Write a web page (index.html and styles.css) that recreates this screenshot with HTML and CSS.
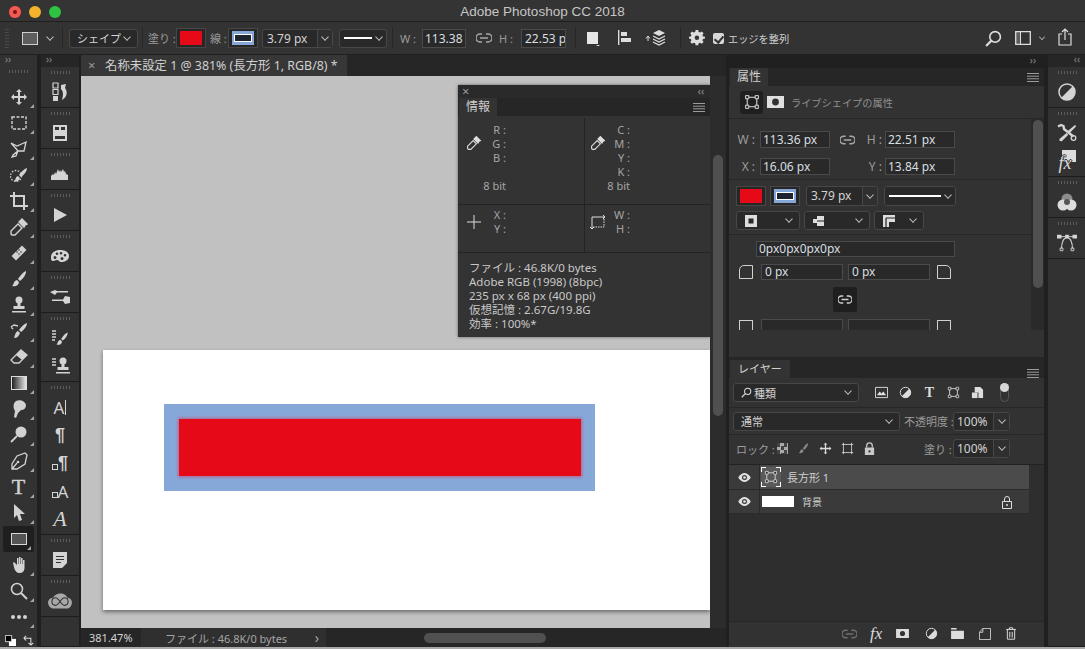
FILE: index.html
```html
<!DOCTYPE html>
<html lang="ja">
<head>
  <meta charset="UTF-8" />
  <title>Adobe Photoshop CC 2018</title>
  <link rel="stylesheet" href="styles.css">
</head>
<body>
<svg class="sprite" xmlns="http://www.w3.org/2000/svg">
  <symbol id="i-link" viewBox="0 0 16 10"><path d="M6 1H4a4 4 0 0 0 0 8h2M10 1h2a4 4 0 0 1 0 8h-2M4 5h8" fill="none" stroke="currentColor" stroke-width="1.5"/></symbol>
  <symbol id="i-dropper" viewBox="0 0 20 20"><path d="M13 2l5 5-2 1-1 2-5-5 1-1zM9 7l4 4-7 7H3l-1-1v-3z" fill="none" stroke="currentColor" stroke-width="1.4"/><path d="M13 2l5 5-2 1-1 2-5-5 1-1z" fill="currentColor"/></symbol>
  <symbol id="i-shape" viewBox="0 0 20 20"><path d="M4 4h12v12H4z" fill="none" stroke="currentColor" stroke-width="1.3"/><path d="M2 2h4v4H2zM14 2h4v4h-4zM2 14h4v4H2zM14 14h4v4h-4z" fill="#262626" stroke="currentColor" stroke-width="1.2"/></symbol>
  <symbol id="i-mask" viewBox="0 0 20 14"><path fill-rule="evenodd" d="M0 0h20v14H0zM10 3a4 4 0 1 0 0 8 4 4 0 0 0 0-8z" fill="currentColor"/></symbol>
  <symbol id="i-adjust" viewBox="0 0 20 20"><circle cx="10" cy="10" r="8" fill="none" stroke="currentColor" stroke-width="1.5"/><path d="M15.7 4.3A8 8 0 0 1 4.3 15.7z" fill="currentColor"/></symbol>
  <symbol id="i-trash" viewBox="0 0 14 16"><path d="M1 3h12M5 3V1h4v2M2.500 3v12h9V3M5.500 6v7M8.500 6v7" fill="none" stroke="currentColor" stroke-width="1.2"/></symbol>
  <symbol id="i-lock" viewBox="0 0 12 14"><path fill-rule="evenodd" d="M1 6h10v8H1zM6 9a1.200 1.200 0 1 0 0 2.400A1.200 1.200 0 0 0 6 9z" fill="currentColor"/><path d="M3 6V4a3 3 0 0 1 6 0v2" fill="none" stroke="currentColor" stroke-width="1.4"/></symbol>
  <symbol id="i-eye" viewBox="0 0 14 10"><path fill-rule="evenodd" d="M0 5c2-3.300 4.500-5 7-5s5 1.700 7 5c-2 3.300-4.500 5-7 5S2 8.300 0 5zM7 2.200a2.800 2.800 0 1 0 0 5.600 2.800 2.800 0 0 0 0-5.600z" fill="currentColor"/><circle cx="7" cy="5" r="1.500" fill="currentColor"/></symbol>
  <symbol id="i-brush" viewBox="0 0 20 20"><path d="M17 2c.5 3-3 8-6 10l-2-2c2-3 5-7 8-8zM8 11l2 2c0 3-3 5-7 4 2-1 1-5 5-6z" fill="currentColor"/></symbol>
  <symbol id="i-lines" viewBox="0 0 12 9"><path d="M0 .5h12M0 3.200h12M0 5.800h12M0 8.500h12" stroke="currentColor" stroke-width="1"/></symbol>
</svg>

<div class="app">
  <header class="titlebar">
    <div class="lights"><i class="light red"></i><i class="light yellow"></i><i class="light green"></i></div>
    <div class="app-title">Adobe Photoshop CC 2018</div>
  </header>

  <div class="options">
    <span class="opt-grip"></span>
    <span class="opt-tool"></span>
    <span class="chev opt-tool-chev"></span>
    <span class="opt-sep"></span>
    <div class="select opt-mode"><span>シェイプ</span><span class="chev"></span></div>
    <span class="opt-sep opt-sep-b"></span>
    <span class="opt-label">塗り :</span>
    <span class="swatch fill"><i></i></span>
    <span class="opt-label opt-line-label">線 :</span>
    <span class="swatch stroke"><i></i></span>
    <div class="spin opt-spin"><span class="spin-val">3.79 px</span><span class="spin-btn"><span class="chev"></span></span></div>
    <div class="select opt-linestyle"><i class="linesample"></i><span class="chev"></span></div>
    <span class="opt-sep opt-sep-c"></span>
    <span class="opt-label opt-w">W :</span>
    <span class="input opt-wval">113.38</span>
    <svg class="opt-link"><use href="#i-link"/></svg>
    <span class="opt-label opt-h">H :</span>
    <span class="input opt-hval">22.53 p</span>
    <span class="opt-sep opt-sep-d"></span>
    <svg class="opt-ico opt-fillop" viewBox="0 0 16 16"><path d="M2 2h11v12H2z" fill="#e6e6e6"/><path d="M11 15h4l-2 1.500z" fill="#ddd"/></svg>
    <svg class="opt-ico opt-align" viewBox="0 0 18 18"><path d="M1 1h1.400v15H1zM4 3h6v4H4zM4 9h10v4H4z" fill="#ddd"/></svg>
    <svg class="opt-ico opt-arrange" viewBox="0 0 22 18"><path d="M3 8v4M1 9.500L3 7l2 2.500" fill="none" stroke="#ddd"/><path d="M14 1l6 3-6 3-6-3z" fill="#ddd"/><path d="M8 7l6 3 6-3M8 10l6 3 6-3M8 13l6 3 6-3" fill="none" stroke="#ddd" stroke-width="1.200"/></svg>
    <span class="opt-sep opt-sep-e"></span>
    <svg class="opt-ico opt-gear" viewBox="0 0 16 16"><path fill-rule="evenodd" d="M6.500 0h3l.4 2.200 1.600.7L13.400 1.600l2 2-1.300 1.900.7 1.600L17 7.500v2l-2.200.4-.7 1.600 1.300 1.900-2 2-1.900-1.300-1.600.7L9.500 17h-3l-.4-2.200-1.600-.7-1.900 1.300-2-2 1.300-1.900-.7-1.600L-1 9.500v-2l2.200-.4.700-1.600L.6 3.600l2-2 1.900 1.300 1.600-.7zM8 6a2.500 2.500 0 1 0 0 5 2.500 2.500 0 0 0 0-5z" fill="#ddd" transform="scale(.9) translate(.8 0)"/></svg>
    <span class="check"></span>
    <span class="opt-edge">エッジを整列</span>
    <span class="opt-spacer"></span>
    <svg class="opt-ico opt-search" viewBox="0 0 16 16"><circle cx="9.500" cy="6.500" r="5" fill="none" stroke="#ddd" stroke-width="1.500"/><path d="M6 10l-5 5" stroke="#ddd" stroke-width="2"/></svg>
    <svg class="opt-ico opt-workspace" viewBox="0 0 16 14"><path d="M.7.700h14.600v12.600H.7z" fill="none" stroke="#ddd" stroke-width="1.300"/><path d="M1 1h4.500v12H1z" fill="#ddd" opacity=".25"/><path d="M5.500 1v12" stroke="#ddd"/></svg>
    <span class="chev opt-ws-chev"></span>
    <svg class="opt-ico opt-share" viewBox="0 0 14 18"><path d="M4 6H1v11h12V6h-3M7 12V1M4 4l3-3 3 3" fill="none" stroke="#ddd" stroke-width="1.200"/></svg>
  </div>

  <div class="workspace">
    <aside class="toolbar">
      <div class="collapse">››</div>
      <div class="grip"></div>
      <div class="tools">
        <div class="tool"><svg viewBox="0 0 20 20"><path d="M10 2l3 3h-2v4h4V7l3 3-3 3v-2h-4v4h2l-3 3-3-3h2v-4H5v2l-3-3 3-3v2h4V5H7z" fill="currentColor"/></svg></div>
        <div class="tool"><svg viewBox="0 0 20 20"><path d="M3 4h14v12H3z" fill="none" stroke="currentColor" stroke-width="1.400" stroke-dasharray="3 1.500"/></svg></div>
        <div class="tool"><svg viewBox="0 0 20 20"><path d="M2 4l6 3 9-4-2 9-6 0-5 4-1 2 4-1 2-5-7-8" fill="none" stroke="currentColor" stroke-width="1.300"/></svg></div>
        <div class="tool"><svg viewBox="0 0 20 20"><circle cx="7" cy="11" r="5.500" fill="none" stroke="currentColor" stroke-width="1.300" stroke-dasharray="1.500 1.500"/><path d="M18 3c0 3-3 7-6 9l-2-2c2-3 5-6 8-7zM9 11l2 2c-1 3-3 4-6 3 2-1 1-4 4-5z" fill="currentColor"/></svg></div>
        <div class="tool"><svg viewBox="0 0 20 20"><path d="M5 1v14h14M1 5h14v14" fill="none" stroke="currentColor" stroke-width="2"/></svg></div>
        <div class="tool"><svg viewBox="0 0 20 20"><use href="#i-dropper"/></svg></div>
        <div class="tool"><svg viewBox="0 0 20 20"><path d="M13 2.500l4.500 4.500L7 17.500 2.500 13z" fill="currentColor"/><path d="M8 9h.01M10 11h.01M10 7h.01M12 9h.01" stroke="#323232" stroke-width="1.600" stroke-linecap="round"/></svg></div>
        <div class="tool"><svg viewBox="0 0 20 20"><use href="#i-brush"/></svg></div>
        <div class="tool"><svg viewBox="0 0 20 20"><circle cx="10" cy="5" r="3.500" fill="currentColor"/><path d="M8.500 8h3v3h4v3h-11v-3h4zM3 16h14v1.500H3z" fill="currentColor"/></svg></div>
        <div class="tool"><svg viewBox="0 0 20 20"><path d="M18 2c0 3-3 7-6 9l-2-2c2-3 5-6 8-7zM9 10l2 2c-1 3-3 5-6 5 1-2 1-6 4-7z" fill="currentColor"/><path d="M2 6l3-2 4 1M4 8l-2-2" fill="none" stroke="currentColor" stroke-width="1.300"/></svg></div>
        <div class="tool"><svg viewBox="0 0 20 20"><path d="M12 3l6 5-8 8H5l-3-3z" fill="none" stroke="currentColor" stroke-width="1.300"/><path d="M12 3l6 5-5 5-6-5z" fill="currentColor"/></svg></div>
        <div class="tool"><span class="gradient-ico"></span></div>
        <div class="tool"><svg viewBox="0 0 20 20"><path d="M7 2c4-2 9 0 10 4 0 3-2 5-5 5l-3 3-2 5-2-1 1-6c-2-3-2-8 1-10z" fill="currentColor"/></svg></div>
        <div class="tool"><svg viewBox="0 0 20 20"><circle cx="12" cy="7" r="5.500" fill="currentColor"/><path d="M8 11l-6 6" stroke="currentColor" stroke-width="1.800"/></svg></div>
        <div class="tool"><svg viewBox="0 0 20 20"><path d="M16 2l2 2-2 9-8 5-5 0 0-5 5-8zM3 18l5-6" fill="none" stroke="currentColor" stroke-width="1.300"/><circle cx="9" cy="11" r="1.300" fill="currentColor"/></svg></div>
        <div class="tool"><span class="tool-t">T</span></div>
        <div class="tool"><svg viewBox="0 0 20 20"><path d="M5 1l11 10h-5l2 6-3 1-2-6-3 3z" fill="currentColor"/></svg></div>
        <div class="tool active"><span class="rect-ico"></span></div>
        <div class="tool"><svg viewBox="0 0 20 20"><path d="M4 8l1-1 3 3V3h1.500v6h.5V2h1.500v7h.5V3h1.500v6h.5V5h1.500v8c0 3-2 5-5 5s-4-2-5-4z" fill="currentColor"/></svg></div>
        <div class="tool"><svg viewBox="0 0 20 20"><circle cx="8" cy="8" r="5.500" fill="none" stroke="currentColor" stroke-width="1.500"/><path d="M12 12l6 6" stroke="currentColor" stroke-width="2"/></svg></div>
        <div class="tool"><svg viewBox="0 0 20 20"><circle cx="4" cy="10" r="2" fill="currentColor"/><circle cx="10" cy="10" r="2" fill="currentColor"/><circle cx="16" cy="10" r="2" fill="currentColor"/></svg></div>
      </div>
      <div class="colors">
        <svg viewBox="0 0 14 14"><path d="M5 5h9v9H5z" fill="#fff"/><path d="M.500.500h8v8h-8z" fill="#000" stroke="#fff"/></svg>
        <svg viewBox="0 0 14 14"><path d="M1 4h9v9M1 4l3-3M1 4l3 3M10 13l-3-3M10 13l3-3" fill="none" stroke="#ddd" stroke-width="1.300"/></svg>
      </div>
    </aside>

    <nav class="dock">
      <div class="collapse">››</div>
      <div class="dock-group">
        <div class="dock-icon"><svg viewBox="0 0 20 20"><path d="M3 1h5v5H3zM3 7.500h5v5H3z" fill="none" stroke="currentColor" stroke-width="1.200"/><path d="M3 14h5v5H3zM11 3l5-1-1 4c3 4 2 9-3 12 1-4 2-8-1-11z" fill="currentColor"/></svg></div>
      </div>
      <div class="dock-group">
        <div class="dock-icon"><svg viewBox="0 0 20 20"><path fill-rule="evenodd" d="M3 2h14v16H3zM5 4v3h4V4zM11 4v3h4V4zM5 13v3h10v-3z" fill="currentColor"/></svg></div>
      </div>
      <div class="dock-group">
        <div class="dock-icon"><svg viewBox="0 0 20 20"><path d="M1 16V12l2-2 1 1 1-3 1 2 2-5 1 3 1-2 1 2 2-3 1 3 1-1 1 3 2 1v5z" fill="currentColor"/></svg></div>
      </div>
      <div class="dock-group">
        <div class="dock-icon"><svg viewBox="0 0 20 20"><path d="M4 3l13 7-13 7z" fill="currentColor"/></svg></div>
      </div>
      <div class="dock-group">
        <div class="dock-icon"><svg viewBox="0 0 20 20"><path fill-rule="evenodd" d="M10 4c5 0 9 2 9 6s-4 6-8 6c-2 0-2-2-4-2s-2 1-4 1-2-2-2-4c0-4 4-7 9-7zM5 10a1.500 1.500 0 1 0 0 3 1.500 1.500 0 0 0 0-3zM7 6.500a1.300 1.300 0 1 0 0 2.600 1.300 1.300 0 0 0 0-2.600zM11 6a1.300 1.300 0 1 0 0 2.600A1.300 1.300 0 0 0 11 6zM15 8a1.300 1.300 0 1 0 0 2.600A1.300 1.300 0 0 0 15 8zM12 11a1.500 1.500 0 1 0 0 3 1.500 1.500 0 0 0 0-3z" fill="currentColor"/></svg></div>
      </div>
      <div class="dock-group">
        <div class="dock-icon"><svg viewBox="0 0 20 20"><path d="M0 5l5-2 2 1h11v1.500H7L5 8zM20 10l-5-1-2 3.500H2V14h11l2 3 5-1z" fill="currentColor"/></svg></div>
      </div>
      <div class="dock-group">
        <div class="dock-icon"><svg viewBox="0 0 20 20"><path d="M2 3h4M2 6h4M2 9h4M2 12h3" stroke="currentColor" stroke-width="1.400"/><use href="#i-brush" x="4" y="3" width="16" height="16"/></svg></div>
        <div class="dock-icon"><svg viewBox="0 0 20 20"><path d="M2 3h4M2 6h4M2 9h4" stroke="currentColor" stroke-width="1.400"/><circle cx="13" cy="5" r="3.500" fill="currentColor"/><path d="M11.500 8h3v3h4v3h-11v-3h4zM6 16h14v1.500H6z" fill="currentColor"/></svg></div>
      </div>
      <div class="dock-group">
        <div class="dock-icon dock-text">A<i class="caret-bar"></i></div>
        <div class="dock-icon dock-text dock-para">¶</div>
        <div class="dock-icon dock-text dock-para"><i class="mini-box"></i>¶</div>
        <div class="dock-icon dock-text"><i class="mini-box"></i>A</div>
        <div class="dock-icon dock-text dock-script">A</div>
      </div>
      <div class="dock-group">
        <div class="dock-icon"><svg viewBox="0 0 20 20"><path fill-rule="evenodd" d="M3 2h14v11l-5 5H3zM6 6v1h8V6zM6 9v1h8V9zM6 12v1h5v-1z" fill="currentColor"/></svg></div>
      </div>
      <div class="dock-group">
        <div class="dock-icon"><svg class="cc-ico" viewBox="0 0 24 16"><path d="M7 15C3 15 1 12 1 9.500 1 7 3 5 5.500 5 7 2 10 1 12 1c4 0 6 2 7 4 2.500 0 4 2 4 4.500S21 15 18 15z" fill="currentColor"/><path d="M8 5c-2 0-3.500 1.500-3.500 3.500S6 12 8 12c3 0 5-7 8-7 2 0 3.500 1.500 3.500 3.500S18 12 16 12c-3 0-5-7-8-7z" fill="none" stroke="#323232" stroke-width="1"/></svg></div>
      </div>
      <div class="dock-group"></div>
    </nav>

    <main class="doc">
      <div class="doc-tabs">
        <div class="doc-tab"><span class="x">×</span>名称未設定 1 @ 381% (長方形 1, RGB/8) *</div>
      </div>
      <div class="doc-mid">
        <div class="canvas">
          <div class="sheet">
            <div class="shape-stroke"><div class="shape-fill"></div></div>
          </div>

          <section class="info">
            <div class="float-top"><span class="x">×</span><span class="float-collapse">‹‹</span></div>
            <div class="tabs info-tabs"><span class="tab">情報</span><svg class="menu"><use href="#i-lines"/></svg></div>
            <div class="info-grid">
              <div class="info-cell info-tall">
                <svg class="info-ico"><use href="#i-dropper"/></svg>
                <div class="info-vals"><b>R :</b><b>G :</b><b>B :</b><b class="blank">&nbsp;</b><b class="bit">8 bit</b></div>
              </div>
              <div class="info-cell info-tall info-right">
                <svg class="info-ico"><use href="#i-dropper"/></svg>
                <div class="info-vals"><b>C :</b><b>M :</b><b>Y :</b><b>K :</b><b class="bit">8 bit</b></div>
              </div>
              <div class="info-cell info-short">
                <svg class="info-ico" viewBox="0 0 16 16"><path d="M8 1v14M1 8h14" stroke="#ddd" fill="none"/></svg>
                <div class="info-vals"><b>X :</b><b>Y :</b></div>
              </div>
              <div class="info-cell info-short info-right">
                <svg class="info-ico" viewBox="0 0 16 16"><path d="M3 13h11V3" fill="none" stroke="#ddd" stroke-dasharray="1.500 1"/><path d="M2 15V3h13M0 13l2 2 2-2M13 1l2 2-2 2" fill="none" stroke="#ddd"/></svg>
                <div class="info-vals"><b>W :</b><b>H :</b></div>
              </div>
            </div>
            <div class="info-text">
              <div>ファイル : 46.8K/0 bytes</div>
              <div>Adobe RGB (1998) (8bpc)</div>
              <div>235 px x 68 px (400 ppi)</div>
              <div>仮想記憶 : 2.67G/19.8G</div>
              <div>効率 : 100%*</div>
            </div>
          </section>
        </div>
        <div class="vscroll"><i></i></div>
      </div>
      <div class="status">
        <span class="zoom-val">381.47%</span>
        <div class="status-file"><span>ファイル : 46.8K/0 bytes</span><span class="status-arrow">›</span></div>
        <div class="hscroll"><i></i></div>
      </div>
    </main>

    <div class="panels">
      <div class="panels-top">››</div>
      <section class="props">
        <div class="tabs"><span class="tab">属性</span><svg class="menu"><use href="#i-lines"/></svg></div>
        <div class="props-head">
          <span class="mode-btn"><svg><use href="#i-shape"/></svg></span>
          <svg class="mode-mask"><use href="#i-mask"/></svg>
          <span class="props-title">ライブシェイプの属性</span>
        </div>
        <div class="props-body">
          <div class="props-scroll">
            <div class="geom">
              <label class="g-lbl">W :</label><span class="input g-in">113.36 px</span>
              <svg class="g-link"><use href="#i-link"/></svg>
              <label class="g-lbl g-second">H :</label><span class="input g-in">22.51 px</span>
              <label class="g-lbl">X :</label><span class="input g-in">16.06 px</span>
              <span></span>
              <label class="g-lbl g-second">Y :</label><span class="input g-in">13.84 px</span>
            </div>
            <div class="stroke-opts">
              <div class="stroke-row">
                <span class="swatch fill"><i></i></span>
                <span class="swatch stroke"><i></i></span>
                <div class="spin props-spin"><span class="spin-val">3.79 px</span><span class="spin-btn"><span class="chev"></span></span></div>
                <div class="select props-line"><i class="linesample"></i><span class="chev"></span></div>
              </div>
              <div class="stroke-row stroke-row-b">
                <div class="select sel-a"><svg viewBox="0 0 14 14"><path fill-rule="evenodd" d="M1 1h12v12H1zM4.500 4.500v5h5v-5z" fill="#ddd"/></svg><span class="chev"></span></div>
                <div class="select sel-b"><svg viewBox="0 0 14 14"><path d="M5 2h7v10H5V9H1V5h4z" fill="#ddd"/><path d="M5 7h7" stroke="#222"/></svg><span class="chev"></span></div>
                <div class="select sel-c"><svg viewBox="0 0 14 14"><path d="M1 1h12v7H7v5H1z" fill="#ddd"/><path d="M4 4h9M4 4v9" stroke="#222" stroke-width="1.200"/></svg><span class="chev"></span></div>
              </div>
            </div>
            <div class="corners">
              <span class="input corner-all">0px0px0px0px</span>
              <div class="corner-row">
                <i class="corner c-tl"></i><span class="input c-in">0 px</span><span class="input c-in">0 px</span><i class="corner c-tr"></i>
              </div>
              <div class="link-row"><span class="link-btn"><svg><use href="#i-link"/></svg></span></div>
              <div class="corner-row">
                <i class="corner"></i><span class="input c-in"></span><span class="input c-in"></span><i class="corner"></i>
              </div>
            </div>
          </div>
          <div class="props-bar"><i></i></div>
        </div>
      </section>

      <section class="layers">
        <div class="tabs"><span class="tab">レイヤー</span><svg class="menu"><use href="#i-lines"/></svg></div>
        <div class="lay-row lay-filter">
          <div class="select filter-sel"><span><svg class="filter-mag" viewBox="0 0 14 14"><circle cx="8.500" cy="5.500" r="4" fill="none" stroke="#ddd" stroke-width="1.300"/><path d="M5.500 8.500L1 13" stroke="#ddd" stroke-width="1.500"/></svg>種類</span><span class="chev"></span></div>
          <div class="filter-icons">
            <svg viewBox="0 0 14 12"><path d="M.5.500h13v11H.5z" fill="none" stroke="#ddd"/><path d="M2 9l3-4 2 2 2-2 3 4z" fill="#ddd"/></svg>
            <svg viewBox="0 0 20 20"><use href="#i-adjust"/></svg>
            <span class="filter-t">T</span>
            <svg viewBox="0 0 20 20"><use href="#i-shape"/></svg>
            <svg viewBox="0 0 14 14"><path d="M4 1h6l3 3v9H8V7H4z" fill="#ddd"/><path d="M1 7h6v6H1z" fill="#ddd"/></svg>
          </div>
          <span class="toggle"><i></i></span>
        </div>
        <div class="lay-row lay-blend">
          <div class="select blend-sel"><span>通常</span><span class="chev"></span></div>
          <span class="lay-lbl opac-lbl">不透明度 :</span>
          <div class="spin lay-spin"><span class="spin-val">100%</span><span class="spin-btn"><span class="chev"></span></span></div>
        </div>
        <div class="lay-row lay-lock">
          <span class="lay-lbl lock-lbl">ロック :</span>
          <div class="lock-icons">
            <span class="checker"></span>
            <svg viewBox="0 0 20 20" class="dim"><use href="#i-brush"/></svg>
            <svg viewBox="0 0 20 20"><path d="M10 1l3 3h-2v5h5V7l3 3-3 3v-2h-5v5h2l-3 3-3-3h2v-5H4v2l-3-3 3-3v2h5V4H7z" fill="#ddd"/></svg>
            <svg viewBox="0 0 16 16"><path d="M3 1v14M1 3h14M13 1v14M1 13h14" fill="none" stroke="#ddd"/></svg>
            <svg viewBox="0 0 12 14"><use href="#i-lock"/></svg>
          </div>
          <span class="lay-lbl fill-lbl">塗り :</span>
          <div class="spin lay-spin"><span class="spin-val">100%</span><span class="spin-btn"><span class="chev"></span></span></div>
        </div>
        <div class="lay-list">
          <div class="layer selected">
            <span class="eye"><svg><use href="#i-eye"/></svg></span>
            <span class="lay-thumb shape-thumb"><svg viewBox="0 0 20 20"><use href="#i-shape"/></svg></span>
            <span class="lay-name">長方形 1</span>
          </div>
          <div class="layer">
            <span class="eye"><svg><use href="#i-eye"/></svg></span>
            <span class="lay-thumb white-thumb"></span>
            <span class="lay-name bg-name">背景</span>
            <svg class="lay-lock-ico" viewBox="0 0 12 14"><path d="M1.500 6.500h9v7h-9z" fill="none" stroke="#ddd"/><path d="M3.500 6V4a2.500 2.500 0 0 1 5 0v2" fill="none" stroke="#ddd"/><circle cx="6" cy="10" r="1" fill="#ddd"/></svg>
          </div>
        </div>
        <div class="lay-foot">
          <svg class="foot-link"><use href="#i-link"/></svg>
          <span class="foot-fx">fx</span>
          <svg class="foot-mask"><use href="#i-mask"/></svg>
          <svg class="foot-adj" viewBox="0 0 20 20"><use href="#i-adjust"/></svg>
          <svg class="foot-dir" viewBox="0 0 14 12"><path d="M0 0h6v1.500H0zM0 3h14v9H0z" fill="#ddd"/></svg>
          <svg class="foot-new" viewBox="0 0 14 14"><path d="M.5 5l4-4.500h9v13h-9l-4 0z M.5 5h4V.5" fill="none" stroke="#ddd"/></svg>
          <svg class="foot-trash"><use href="#i-trash"/></svg>
        </div>
      </section>
    </div>

    <nav class="dock dock-right">
      <div class="collapse">‹‹</div>
      <div class="dock-group">
        <div class="dock-icon"><svg viewBox="0 0 20 20"><use href="#i-adjust"/></svg></div>
      </div>
      <div class="dock-group">
        <div class="dock-icon"><svg viewBox="0 0 20 20"><path d="M1 3.500l3-1.500 2.500 1L7 6l9.500 7.500" fill="none" stroke="currentColor" stroke-width="2.400"/><circle cx="16.500" cy="15" r="2.300" fill="none" stroke="currentColor" stroke-width="1.300"/><path d="M18 2l1.200 1.200-7 7.300-2-2zM9.500 10l1.800 1.800-6.500 6.500-2.200-.2-.2-2z" fill="currentColor"/></svg></div>
        <div class="dock-icon fx-ico"><i></i><span>fx</span></div>
      </div>
      <div class="dock-group">
        <div class="dock-icon"><svg viewBox="0 0 20 20"><circle cx="10" cy="7" r="5.500" fill="#8c8c8c"/><circle cx="6" cy="13" r="5.500" fill="#ddd"/><circle cx="14" cy="13" r="5.500" fill="#ddd"/><circle cx="10" cy="10" r="3" fill="#555"/></svg></div>
      </div>
      <div class="dock-group">
        <div class="dock-icon"><svg viewBox="0 0 22 20"><path d="M3 3h16" stroke="currentColor"/><path d="M0 1h5v4H0zM17 1h5v4h-5zM9 1h4v4H9z" fill="currentColor"/><path d="M5 16c0-6 2-12 6-12s6 6 6 12" fill="none" stroke="currentColor" stroke-width="1.200"/><path d="M3.500 15.500h3v3h-3zM15.500 15.500h3v3h-3z" fill="none" stroke="currentColor"/></svg></div>
      </div>
      <div class="dock-group"></div>
    </nav>
  </div>
</div>
</body>
</html>
```

FILE: styles.css
```css
* { box-sizing: border-box; margin: 0; padding: 0; }
html, body { height: 100%; }
body {
  font-family: "Noto Sans", "Noto Sans CJK JP", sans-serif;
  font-size: 11px;
  background: #1f1f1f;
  color: #c8c8c8;
  overflow: hidden;
}
.sprite { display: none; }
i { font-style: normal; }
svg { display: block; }

.app { width: 1085px; height: 649px; display: flex; flex-direction: column; border-bottom: 2px solid #a9a9a9; }

/* title bar */
.titlebar {
  height: 22px;
  flex: none;
  display: flex;
  align-items: center;
  justify-content: center;
  position: relative;
  padding-top: 1px;
  background: #343434;
  border-bottom: 1px solid #1f1f1f;
}
.lights { position: absolute; left: 9px; top: 6px; display: flex; gap: 8px; }
.light { width: 12px; height: 12px; border-radius: 50%; }
.light.red { background: #f25a52; box-shadow: inset 0 0 0 4px #f25a52, inset 0 0 0 6px #7a1512; }
.light.yellow { background: #f4b32c; }
.light.green { background: #2ec442; }
.app-title { font-family: "Liberation Sans", sans-serif; font-size: 13.5px; color: #c6c6c6; }

/* options bar */
.options {
  height: 33px;
  flex: none;
  display: flex;
  align-items: center;
  padding-left: 5px;
  background: #333;
  border-bottom: 1px solid #1f1f1f;
  color: #a9a9a9;
}
.opt-grip { width: 4px; height: 20px; background: repeating-linear-gradient(0deg, #4a4a4a 0 1px, transparent 1px 3px); }
.opt-tool { width: 16px; height: 13px; margin-left: 13px; background: #5e5e5e; border: 1px solid #d0d0d0; }
.chev { display: inline-block; width: 6px; height: 6px; border-right: 1px solid #c8c8c8; border-bottom: 1px solid #c8c8c8; transform: rotate(45deg) scale(.9); margin-top: -3px; flex: none; }
.opt-tool-chev { margin-left: 9px; }
.opt-sep { width: 1px; height: 22px; background: #272727; margin-left: 9px; }
.select {
  display: flex;
  align-items: center;
  justify-content: space-between;
  border: 1px solid #474747;
  border-radius: 3px;
  background: #292929;
  color: #d2d2d2;
  padding: 0 7px;
  height: 19px;
}
.opt-mode { width: 69px; margin-left: 6px; }
.opt-sep-b { margin-left: 4px; }
.opt-label { color: #9a9a9a; white-space: nowrap; }
.opt-sep-b + .opt-label { margin-left: 5px; width: 28px; }
.swatch { display: block; width: 30px; height: 20px; padding: 2px 3px; border: 1px solid #474747; background: #272727; flex: none; }
.swatch i { display: block; height: 100%; }
.swatch.fill i { background: #e60a19; }
.swatch.stroke i { background: #86a8d9; display: flex; align-items: center; justify-content: center; }
.swatch.stroke i::after { content: ""; width: 16px; height: 6px; background: #1f2530; border: 1px solid #fff; }
.opt-line-label { margin-left: 4px; width: 18px; }
.spin { display: flex; height: 19px; border: 1px solid #474747; border-radius: 3px; background: #292929; color: #d2d2d2; }
.spin-val { flex: 1; padding-left: 4px; line-height: 17px; font-size: 12px; }
.spin-btn { width: 15px; border-left: 1px solid #474747; display: flex; align-items: center; justify-content: center; background: #2f2f2f; }
.opt-spin { width: 71px; margin-left: 4px; }
.linesample { display: block; width: 28px; height: 2px; background: #fff; }
.opt-linestyle { width: 48px; margin-left: 6px; padding: 0 4px; }
.opt-sep-c { margin-left: 5px; }
.opt-w { margin-left: 7px; width: 22px; }
.input { display: block; border: 1px solid #4a4a4a; background: #292929; color: #d6dee0; font-size: 12px; white-space: nowrap; overflow: hidden; }
.opt-wval { width: 44px; height: 19px; line-height: 17px; padding-left: 2px; }
.opt-link { width: 16px; height: 10px; margin-left: 10px; color: #a9a9a9; }
.opt-h { margin-left: 7px; width: 22px; }
.opt-hval { width: 45px; height: 19px; line-height: 17px; padding-left: 3px; }
.opt-sep-d { margin-left: 9px; }
.opt-ico { flex: none; }
.opt-fillop { width: 16px; height: 16px; margin-left: 9px; }
.opt-align { width: 18px; height: 18px; margin-left: 16px; }
.opt-arrange { width: 22px; height: 18px; margin-left: 10px; }
.opt-sep-e { margin-left: 13px; }
.opt-gear { width: 16px; height: 16px; margin-left: 8px; }
.check { width: 11px; height: 11px; margin-left: 8px; border-radius: 2px; background: #d8d8d8; position: relative; }
.check::after { content: ""; position: absolute; left: 3px; top: 1px; width: 4px; height: 7px; border-right: 2px solid #333; border-bottom: 2px solid #333; transform: rotate(40deg); }
.opt-edge { margin-left: 4px; font-size: 10.2px; color: #cfcfcf; }
.opt-spacer { flex: 1; }
.opt-search { width: 17px; height: 17px; }
.opt-workspace { width: 16px; height: 14px; margin-left: 13px; }
.opt-ws-chev { margin-left: 8px; transform: rotate(45deg) scale(.7); }
.opt-share { width: 14px; height: 18px; margin: -2px 13px 0 13px; }

/* work area */
.workspace { flex: 1; display: flex; min-height: 0; background: #202020; }
.collapse { height: 11px; line-height: 9px; font-size: 10px; color: #8a8a8a; padding-left: 5px; }
.grip { height: 3px; width: 20px; margin: 4px auto 0; background: repeating-linear-gradient(90deg, #5b5b5b 0 1px, transparent 1px 3px); }

.toolbar { width: 37px; flex: none; background: #323232; display: flex; flex-direction: column; position: relative; }
.tools { margin-top: 11px; flex: 1; }
.tool { height: 26px; display: flex; align-items: center; justify-content: center; position: relative; color: #d2d2d2; }
.tool svg { width: 20px; height: 20px; }
.tool::after { content: ""; position: absolute; right: 3px; bottom: 2px; border: 2px solid transparent; border-right-color: #a5a5a5; border-bottom-color: #a5a5a5; }
.tool.active { background: #1f1f1f; margin: 0 3px; border-radius: 2px; }
.gradient-ico { width: 16px; height: 14px; background: linear-gradient(90deg, #222, #e5e5e5); border: 1px solid #ddd; }
.tool-t { font-family: "Liberation Serif", serif; font-size: 22px; line-height: 1; -webkit-text-stroke: .4px #d2d2d2; }
.rect-ico { width: 16px; height: 12px; background: #555; border: 1px solid #d8d8d8; }
.colors { height: 16px; display: flex; align-items: flex-end; gap: 7px; padding: 0 0 0 5px; margin-bottom: 1px; }
.colors svg { width: 11px; height: 11px; }

.dock { width: 39px; flex: none; margin-left: 4px; background: #262626; display: flex; flex-direction: column; border-right: 1px solid #1f1f1f; }
.dock-right { width: 38px; margin-left: 4px; border-right: none; }
.dock .collapse { height: 12px; }
.dock-right .collapse { text-align: right; padding: 0 6px 0 0; }
.dock-group { padding: 11px 0 1px; background: #323232; border-bottom: 1px solid #1c1c1c; position: relative; }
.dock-group::before { content: ""; position: absolute; top: 4px; left: 10px; width: 19px; height: 3px; background: repeating-linear-gradient(90deg, #5b5b5b 0 1px, transparent 1px 3px); }
.dock-group:last-child { flex: 1; }
.dock-group:last-child::before { display: none; }
.dock-icon { height: 28px; display: flex; align-items: center; justify-content: center; color: #d4d4d4; position: relative; }
.dock-icon svg { width: 20px; height: 20px; }
.dock-icon .cc-ico { width: 26px; height: 18px; color: #a8a8a8; }
.dock-text { font-size: 17px; }
.caret-bar { width: 1px; height: 15px; background: #d4d4d4; margin-left: 1px; }
.dock-para { font-family: "Liberation Sans", sans-serif; font-size: 18px; font-weight: bold; }
.mini-box { width: 6px; height: 6px; border: 1px solid #d4d4d4; margin-top: 8px; }
.dock-script { font-family: "Liberation Serif", serif; font-style: italic; font-size: 22px; }
.fx-ico i { position: absolute; left: 14px; top: 3px; width: 14px; height: 12px; background: #dcdcdc; }
.fx-ico span { position: relative; font-family: "Liberation Serif", serif; font-style: italic; font-size: 18px; line-height: 20px; color: #dcdcdc; text-shadow: 1px 0 #323232, -1px 0 #323232, 0 1px #323232, 0 -1px #323232; margin: 3px 4px 0 0; }

/* document */
.doc { width: 645px; flex: none; margin-left: 1px; display: flex; flex-direction: column; min-height: 0; }
.doc-tabs { height: 21px; flex: none; background: #262626; }
.doc-tab { width: 266px; height: 21px; line-height: 20px; background: #373737; color: #d0d0d0; font-size: 12.4px; white-space: nowrap; padding-left: 7px; }
.x { color: #9a9a9a; font-size: 13px; display: inline-block; width: 17px; }
.doc-mid { flex: 1; display: flex; min-height: 0; }
.canvas { width: 629px; background: #c1c1c1; position: relative; overflow: hidden; padding: 274px 0 0 22px; }
.sheet { height: 260px; background: #fff; box-shadow: 0 2px 4px rgba(0,0,0,0.45); padding: 54px 0 0 61px; }
.shape-stroke { width: 431px; height: 87px; background: #86a8d9; padding: 15px 14px 15px 15px; }
.shape-fill { height: 100%; background: #e60a19; box-shadow: 0 0 3px 1px rgba(215,50,90,0.6); }
.vscroll { width: 16px; background: #2c2c2c; padding: 79px 3px 0; }
.vscroll i { display: block; height: 261px; background: #505050; border-radius: 5px; }
.status { height: 19px; flex: none; display: flex; align-items: center; background: #262626; }
.zoom-val { width: 60px; padding-left: 8px; color: #d4d4d4; }
.status-file { width: 185px; height: 19px; display: flex; align-items: center; justify-content: space-between; background: #2f2f2f; color: #a5a5a5; padding: 0 7px 0 24px; }
.status-arrow { font-size: 14px; }
.hscroll { flex: 1; padding-left: 98px; }
.hscroll i { display: block; width: 122px; height: 10px; background: #505050; border-radius: 5px; }

/* floating info panel */
.info { position: absolute; left: 377px; top: 9px; width: 252px; height: 252px; background: #333; box-shadow: 0 0 3px rgba(0,0,0,0.5); }
.float-top { height: 13px; background: #2a2a2a; display: flex; justify-content: space-between; padding: 0 6px 0 4px; line-height: 12px; color: #9a9a9a; }
.float-collapse { font-size: 10px; }
.tabs { height: 18px; background: #262626; display: flex; justify-content: space-between; align-items: center; padding-left: 1px; }
.tab { display: block; height: 18px; line-height: 18px; padding: 0 7px; background: #333; color: #d0d0d0; font-size: 12px; }
.menu { width: 12px; height: 9px; color: #9c9c9c; margin-right: 5px; }
.info-grid { display: grid; grid-template-columns: 126px 1fr; grid-template-rows: 87px 48px; margin-top: 2px; }
.info-cell { display: flex; align-items: center; padding-left: 8px; border-bottom: 1px solid #232323; }
.info-right { border-left: 1px solid #232323; padding-left: 5px; }
.info-tall { padding-bottom: 6px; }
.info-tall .info-ico { margin-top: -30px; }
.info-short { align-items: flex-start; padding-top: 3px; }
.info-short .info-ico { margin-top: 6px; }
.info-ico { width: 16px; height: 16px; color: #ddd; flex: none; }
.info-vals { display: flex; flex-direction: column; width: 24px; color: #a5a5a5; line-height: 14px; text-align: right; }
.info-vals b { font-weight: normal; }
.bit { white-space: nowrap; }
.info-text { padding: 8px 0 0 11px; line-height: 14px; font-size: 11.5px; color: #c8c8c8; }

/* right panels */
.panels { width: 315px; flex: none; margin-left: 3px; display: flex; flex-direction: column; }
.panels-top { height: 13px; line-height: 10px; font-size: 10px; color: #8a8a8a; text-align: right; padding-right: 8px; }
.props { height: 289px; background: #323232; flex: none; }
.props-head { height: 33px; display: flex; align-items: center; padding-left: 11px; border-bottom: 1px solid #272727; }
.mode-btn { width: 23px; height: 23px; background: #1f1f1f; border-radius: 3px; display: flex; align-items: center; justify-content: center; color: #e0e0e0; }
.mode-btn svg { width: 16px; height: 16px; }
.mode-mask { width: 17px; height: 12px; margin-left: 4px; color: #e0e0e0; }
.props-title { margin-left: 7px; color: #8f8f8f; font-size: 10.2px; }
.props-body { height: 211px; display: flex; overflow: hidden; background: #2e2e2e; }
.props-scroll { width: 302px; background: #323232; overflow: hidden; flex: none; }
.props-bar { width: 13px; padding: 1px 1px 0 2px; background: #2a2a2a; }
.props-bar i { display: block; height: 168px; background: #505050; border-radius: 5px; }
.geom { display: grid; grid-template-columns: 31px 70px 36px 19px 70px; grid-auto-rows: 17px; row-gap: 10px; align-items: center; padding-top: 12px; height: 61px; border-bottom: 1px solid #272727; }
.g-lbl { text-align: right; padding-right: 5px; color: #9c9c9c; font-size: 12px; }
.g-second { padding-right: 3px; }
.g-in { height: 17px; line-height: 15px; padding-left: 2px; }
.g-link { width: 15px; height: 10px; margin-left: 10px; color: #a9a9a9; }
.stroke-opts { height: 55px; padding: 6px 0 0 7px; border-bottom: 1px solid #272727; }
.stroke-row { display: flex; align-items: center; gap: 4px; }
.stroke-row .swatch { width: 30px; height: 20px; }
.props-spin { width: 72px; margin-left: 2px; height: 20px; }
.props-line { width: 72px; height: 20px; margin-left: 2px; padding: 0 4px; }
.props-line .linesample { width: 52px; }
.stroke-row-b { margin-top: 5px; }
.stroke-row-b svg { width: 14px; height: 14px; }
.sel-a { width: 64px; }
.sel-b { width: 66px; }
.sel-c { width: 50px; }
.corners { padding-left: 27px; }
.corner-all { width: 199px; height: 16px; line-height: 14px; margin-top: 6px; padding-left: 2px; }
.corner-row { display: flex; align-items: center; gap: 5px; margin: 7px 0 0 -17px; }
.corner { width: 14px; height: 14px; border: 1px solid #d0d0d0; display: block; }
.c-tl { border-top-left-radius: 5px; }
.c-tr { border-top-right-radius: 5px; }
.c-in { width: 82px; height: 16px; line-height: 14px; padding-left: 3px; }
.corner-row .corner:first-child { margin-right: 3px; }
.corner-row .corner:last-child { margin-left: 2px; }
.link-row { display: flex; justify-content: center; width: 177px; margin: 7px 0 0 0; }
.link-btn { width: 24px; height: 25px; background: #1f1f1f; border-radius: 2px; display: flex; align-items: center; justify-content: center; color: #d0d0d0; }
.link-btn svg { width: 14px; height: 9px; }

.layers { flex: 1; background: #2e2e2e; display: flex; flex-direction: column; min-height: 0; }
.layers .tabs { height: 21px; align-items: flex-end; }
.layers .tab { padding: 0 8px; font-size: 11px; }
.lay-row { display: flex; align-items: center; background: #323232; padding-left: 4px; }
.lay-filter { height: 30px; border-bottom: 1px solid #272727; }
.lay-blend { height: 27px; border-bottom: 1px solid #272727; }
.lay-lock { height: 30px; padding-bottom: 2px; border-bottom: 1px solid #222; }
.filter-sel { width: 126px; }
.filter-sel > span:first-child { display: flex; align-items: center; gap: 2px; }
.filter-mag { width: 11px; height: 11px; }
.filter-icons { display: flex; align-items: center; gap: 11px; margin-left: 16px; color: #ddd; }
.filter-icons svg { width: 13px; height: 13px; }
.filter-t { font-family: "Liberation Serif", serif; font-weight: bold; font-size: 14px; line-height: 13px; width: 13px; text-align: center; }
.toggle { width: 9px; height: 19px; margin-left: 16px; border: 1px solid #555; border-radius: 5px; position: relative; }
.toggle i { position: absolute; left: -1px; top: -1px; width: 9px; height: 9px; border-radius: 50%; background: #d8d8d8; }
.blend-sel { width: 167px; }
.lay-lbl { color: #9c9c9c; white-space: nowrap; }
.opac-lbl { margin-left: 4px; width: 49px; }
.lay-spin { width: 57px; }
.lay-spin .spin-val { padding-left: 3px; }
.lay-spin .spin-btn { width: 16px; }
.lock-lbl { margin-left: 3px; width: 41px; }
.lock-icons { display: flex; align-items: center; gap: 9px; }
.lock-icons svg { width: 13px; height: 13px; }
.lock-icons .dim { color: #888; }
.checker { width: 11px; height: 11px; background: repeating-conic-gradient(#aaa 0 25%, #444 0 50%) 0 0 / 7px 7px; }
.fill-lbl { margin-left: 48px; width: 29px; }
.lay-list { width: 300px; background: #2e2e2e; }
.layer { height: 24px; display: flex; align-items: center; position: relative; border-bottom: 1px solid #2a2a2a; background: #3a3a3a; }
.layer .eye { width: 31px; height: 100%; display: flex; align-items: center; justify-content: center; flex: none; border-right: 1px solid #2a2a2a; color: #e0e0e0; }
.eye svg { width: 13px; height: 9px; }
.layer.selected { background: #4b4b4b; height: 25px; }
.layer.selected .eye { background: #3a3a3a; }
.lay-thumb { flex: none; }
.shape-thumb { width: 20px; height: 20px; margin-left: 1px; padding: 3px; color: #d8d8d8; background: linear-gradient(#fff,#fff) 0 0/5px 1px no-repeat, linear-gradient(#fff,#fff) 0 0/1px 5px no-repeat, linear-gradient(#fff,#fff) 100% 0/5px 1px no-repeat, linear-gradient(#fff,#fff) 100% 0/1px 5px no-repeat, linear-gradient(#fff,#fff) 0 100%/5px 1px no-repeat, linear-gradient(#fff,#fff) 0 100%/1px 5px no-repeat, linear-gradient(#fff,#fff) 100% 100%/5px 1px no-repeat, linear-gradient(#fff,#fff) 100% 100%/1px 5px no-repeat, #5a5a5a; }
.shape-thumb svg { width: 14px; height: 14px; }
.white-thumb { width: 32px; height: 11px; margin-left: 2px; background: #fff; }
.lay-name { margin-left: 6px; color: #cfcfcf; font-size: 11px; }
.bg-name { margin-left: 8px; font-size: 10px; }
.lay-lock-ico { position: absolute; right: 16px; top: 5px; width: 12px; height: 14px; }
.lay-foot { margin-top: auto; height: 26px; background: #323232; border-top: 1px solid #272727; display: flex; align-items: center; padding-left: 113px; padding-bottom: 2px; color: #dcdcdc; }
.foot-link { width: 15px; height: 10px; color: #6e6e6e; }
.foot-fx { margin-left: 13px; width: 16px; font-family: "Liberation Serif", serif; font-style: italic; font-size: 17px; line-height: 14px; }
.foot-mask { width: 13px; height: 9px; margin-left: 10px; }
.foot-adj { width: 13px; height: 13px; margin-left: 16px; }
.foot-dir { width: 13px; height: 11px; margin-left: 13px; }
.foot-new { width: 12px; height: 12px; margin-left: 15px; }
.foot-trash { width: 12px; height: 13px; margin-left: 14px; }
```
